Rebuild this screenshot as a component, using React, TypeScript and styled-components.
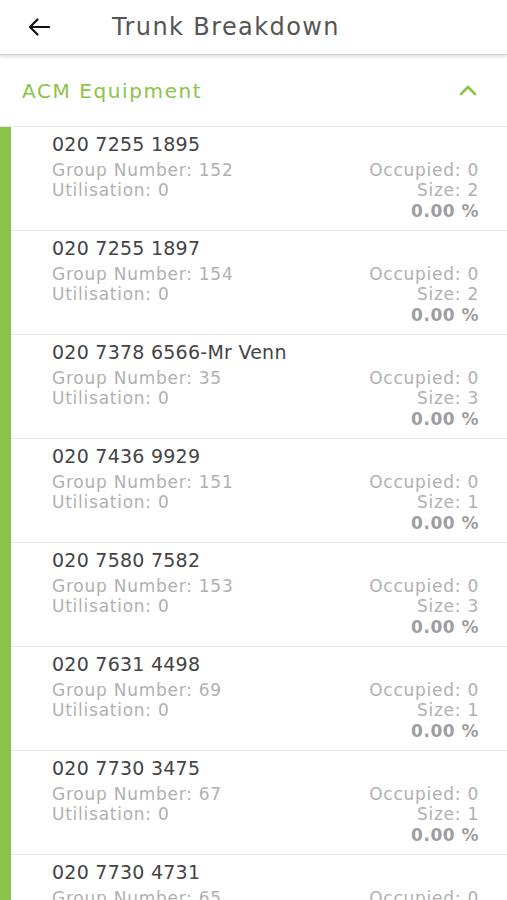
import { createGlobalStyle, styled } from "styled-components";

const GlobalStyle = createGlobalStyle`
  body {
    margin: 0;
    background: #ffffff;
    font-family: "DejaVu Sans", "Open Sans", sans-serif;
  }
`;

const Screen = styled.div`
  width: 507px;
  height: 900px;
  overflow: hidden;
  background: #ffffff;
`;

const Toolbar = styled.header`
  height: 54px;
  display: flex;
  align-items: center;
  padding-left: 26px;
  border-bottom: 1px solid #cfcfcf;
  box-shadow: 0 2px 3px rgba(0, 0, 0, 0.12);
  position: relative;
  z-index: 1;
`;

const BackButton = styled.button`
  border: none;
  background: none;
  padding: 0;
  width: 26px;
  height: 26px;
  display: flex;
  align-items: center;
  justify-content: center;
`;

const Title = styled.h1`
  margin: 0 0 0 60px;
  font-size: 24px;
  font-weight: 400;
  color: #555555;
  letter-spacing: 1.4px;
`;

const SectionHeader = styled.div`
  height: 71px;
  display: flex;
  align-items: center;
  justify-content: space-between;
  padding: 0 30px 0 22px;
  border-bottom: 1px solid #e8e8e8;
  color: #8bc34a;
  font-size: 20px;
  letter-spacing: 1.6px;
`;

const List = styled.div`
  border-left: 11px solid #8bc34a;
`;

const Row = styled.div`
  height: 104px;
  box-sizing: border-box;
  border-bottom: 1px solid #e6e6e6;
  padding: 5px 28px 0 41px;
`;

const Number = styled.div`
  font-size: 19px;
  line-height: 24px;
  letter-spacing: 0.25px;
  color: #444444;
`;

const Details = styled.div`
  display: flex;
  justify-content: space-between;
  margin-top: 3.5px;
  font-size: 17px;
  line-height: 20.5px;
  letter-spacing: 0.75px;
  color: #b0b0b0;
`;

const Column = styled.div<{ $right?: boolean }>`
  display: flex;
  flex-direction: column;
  text-align: ${(p) => (p.$right ? "right" : "left")};
`;

const Percent = styled.span`
  font-weight: 700;
  letter-spacing: 0.5px;
  color: #9e9e9e;
`;

interface ITrunk {
  number: string;
  group: number;
  size: number;
}

const trunks: ITrunk[] = [
  { number: "020 7255 1895", group: 152, size: 2 },
  { number: "020 7255 1897", group: 154, size: 2 },
  { number: "020 7378 6566-Mr Venn", group: 35, size: 3 },
  { number: "020 7436 9929", group: 151, size: 1 },
  { number: "020 7580 7582", group: 153, size: 3 },
  { number: "020 7631 4498", group: 69, size: 1 },
  { number: "020 7730 3475", group: 67, size: 1 },
  { number: "020 7730 4731", group: 65, size: 1 },
];

const App = () => {
  return (
    <Screen>
      <GlobalStyle />
      <Toolbar>
        <BackButton aria-label="Back">
          <svg width="22" height="18" viewBox="0 0 22 18" fill="none">
            <path
              d="M21 9H2M9.5 1.5 2 9l7.5 7.5"
              stroke="#111"
              strokeWidth="2.2"
              strokeLinecap="round"
              strokeLinejoin="round"
            />
          </svg>
        </BackButton>
        <Title>Trunk Breakdown</Title>
      </Toolbar>
      <SectionHeader>
        <span>ACM Equipment</span>
        <svg width="18" height="11" viewBox="0 0 18 11" fill="none">
          <path
            d="M2 9l7-7 7 7"
            stroke="#8bc34a"
            strokeWidth="2.6"
            strokeLinecap="round"
            strokeLinejoin="round"
          />
        </svg>
      </SectionHeader>
      <List>
        {trunks.map((t) => (
          <Row key={t.number}>
            <Number>{t.number}</Number>
            <Details>
              <Column>
                <span>Group Number: {t.group}</span>
                <span>Utilisation: 0</span>
              </Column>
              <Column $right>
                <span>Occupied: 0</span>
                <span>Size: {t.size}</span>
                <Percent>0.00 %</Percent>
              </Column>
            </Details>
          </Row>
        ))}
      </List>
    </Screen>
  );
};

export default App;
